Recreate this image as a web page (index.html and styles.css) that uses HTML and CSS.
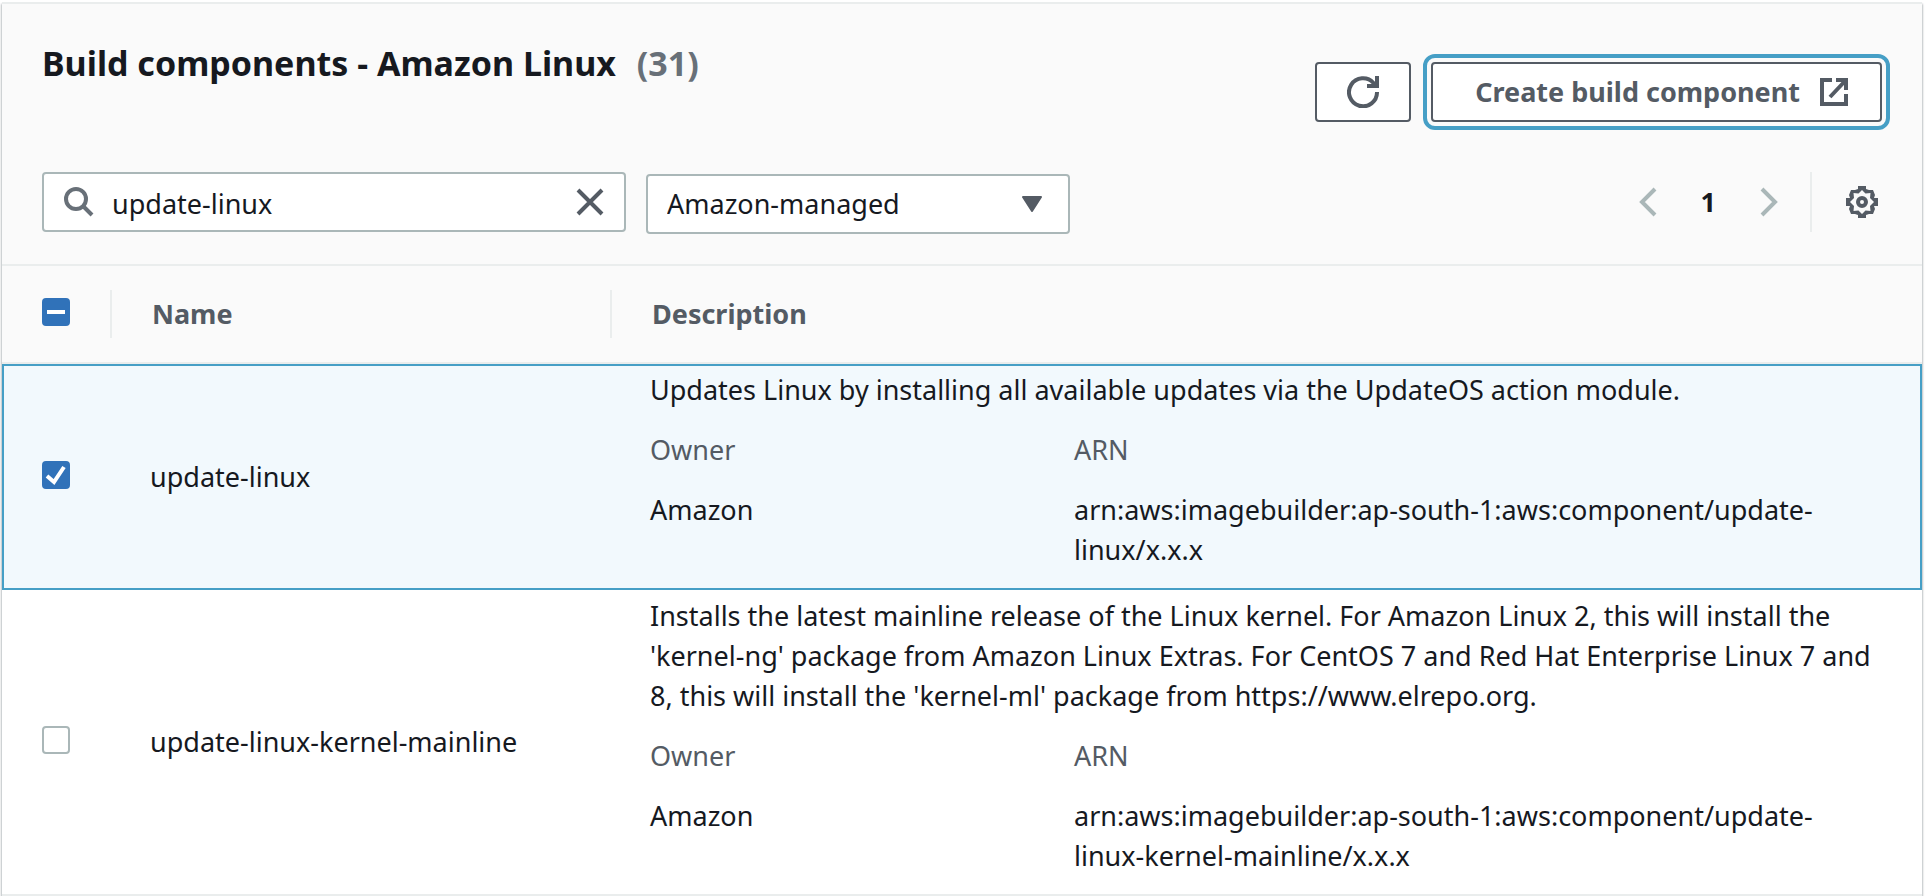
FILE: index.html
```html
<!DOCTYPE html>
<html lang="en">
<head>
<meta charset="utf-8">
<meta name="viewport" content="width=device-width, initial-scale=1">
<title>Build components - Amazon Linux</title>
<link rel="stylesheet" href="styles.css">
</head>
<body>
<main class="panel">
  <header class="panel-header">
    <div class="title-row">
      <h1 class="title">Build components - Amazon Linux <span class="count">(31)</span></h1>
      <div class="actions">
        <button class="btn btn-icon" type="button" aria-label="Refresh">
          <svg class="icon" viewBox="0 0 32 32" aria-hidden="true"><path d="M30 16A14 14 0 1 1 26.500 7L29 10M30 0v12M20 10h12" /></svg>
        </button>
        <button class="btn btn-focus" type="button">
          <span>Create build component</span>
          <svg class="icon icon-external" viewBox="0 0 28 28" aria-hidden="true"><path d="M12 2H2v24h24V16M16 2h10v10M26 2L10 19" /></svg>
        </button>
      </div>
    </div>
    <div class="tools-row">
      <div class="filters">
        <div class="search">
          <svg class="icon icon-search" viewBox="0 0 30 30" aria-hidden="true"><circle cx="12" cy="12" r="10" /><path d="M19 19l9 9" /></svg>
          <input class="search-input" type="text" value="update-linux" aria-label="Find components">
          <button class="plain" type="button" aria-label="Clear filter">
            <svg class="icon icon-close" viewBox="0 0 28 28" aria-hidden="true"><path d="M2 2l24 24M26 2L2 26" /></svg>
          </button>
        </div>
        <div class="select-wrap">
          <select class="select" aria-label="Component owner">
            <option>Amazon-managed</option>
          </select>
          <svg class="caret" viewBox="0 0 20 16" aria-hidden="true"><path d="M1 1h18l-9 14z" /></svg>
        </div>
      </div>
      <nav class="pager" aria-label="Pagination">
        <button class="plain" type="button" aria-label="Previous page">
          <svg class="icon icon-chevron" viewBox="0 0 18 30" aria-hidden="true"><path d="M16 2L3 15l13 13" /></svg>
        </button>
        <button class="plain page" type="button" aria-current="page">1</button>
        <button class="plain" type="button" aria-label="Next page">
          <svg class="icon icon-chevron" viewBox="0 0 18 30" aria-hidden="true"><path d="M2 2l13 13L2 28" /></svg>
        </button>
        <button class="plain settings" type="button" aria-label="Preferences">
          <svg class="icon" viewBox="0 0 32 32" aria-hidden="true"><path class="gear" d="M12 0h8v3l3 1h4l2 5-1 3h4v8h-4l1 3-2 5h-4l-3 1v3h-8v-3l-3-1H5l-2-5 1-3H0v-8h4L3 9l2-5h4l3-1zM16 4l-3.500 3.500-5-.500.500 5L4 16l4 4-.500 5 5-.500L16 28l3.500-3.500 5 .500-.500-5L28 16l-4-4 .500-5-5 .500z" /><circle cx="16" cy="16" r="4" /></svg>
        </button>
      </nav>
    </div>
  </header>

  <table class="components">
    <thead>
      <tr>
        <th class="col-check" scope="col">
          <label class="check">
            <input class="check-box check-on" type="checkbox" aria-label="Select all components">
            <svg class="check-mark" viewBox="0 0 28 28" aria-hidden="true"><path d="M5 14h18" /></svg>
          </label>
        </th>
        <th class="col-name" scope="col"><div class="head">Name</div></th>
        <th scope="col"><div class="head">Description</div></th>
      </tr>
    </thead>
    <tbody>
      <tr class="selected">
        <td class="col-check">
          <label class="check">
            <input class="check-box check-on" type="checkbox" checked aria-label="Select update-linux">
            <svg class="check-mark" viewBox="0 0 28 28" aria-hidden="true"><path d="M5 15l7 6L22 6" /></svg>
          </label>
        </td>
        <td class="name">update-linux</td>
        <td class="details">
          <p class="text">Updates Linux by installing all available updates via the UpdateOS action module.</p>
          <dl class="meta">
            <div class="field"><dt>Owner</dt><dd>Amazon</dd></div>
            <div class="field"><dt>ARN</dt><dd>arn:aws:imagebuilder:ap-south-1:aws:component/update-linux/x.x.x</dd></div>
          </dl>
        </td>
      </tr>
      <tr>
        <td class="col-check">
          <label class="check">
            <input class="check-box" type="checkbox" aria-label="Select update-linux-kernel-mainline">
          </label>
        </td>
        <td class="name">update-linux-kernel-mainline</td>
        <td class="details">
          <p class="text">Installs the latest mainline release of the Linux kernel. For Amazon Linux 2, this will install the 'kernel-ng' package from Amazon Linux Extras. For CentOS 7 and Red Hat Enterprise Linux 7 and 8, this will install the 'kernel-ml' package from https://www.elrepo.org.</p>
          <dl class="meta">
            <div class="field"><dt>Owner</dt><dd>Amazon</dd></div>
            <div class="field"><dt>ARN</dt><dd>arn:aws:imagebuilder:ap-south-1:aws:component/update-linux-kernel-mainline/x.x.x</dd></div>
          </dl>
        </td>
      </tr>
    </tbody>
  </table>
</main>
</body>
</html>
```
FILE: styles.css
```css
* {
  box-sizing: border-box;
}

body {
  margin: 0;
  padding: 2px 8px 0 2px;
  background: #fff;
  color: #16191f;
  font-family: "Noto Sans", "Open Sans", sans-serif;
  font-size: 27px;
  line-height: 40px;
}

button,
input,
select {
  margin: 0;
  font: inherit;
  color: inherit;
}

.panel {
  border-top: 2px solid #eaeded;
  background: #fff;
  box-shadow: 0 2px 2px rgba(0, 28, 36, 0.3), 1px 2px 2px rgba(0, 28, 36, 0.15), -1px 2px 2px rgba(0, 28, 36, 0.15);
}

.panel-header {
  display: flex;
  flex-direction: column;
  gap: 50px;
  padding: 38px 40px 30px;
  border-bottom: 2px solid #eaeded;
  background: #fafafa;
}

.title-row,
.tools-row {
  display: flex;
  align-items: flex-start;
  justify-content: space-between;
}

.title {
  margin: 0;
  font-size: 34px;
  line-height: 42px;
  font-weight: 700;
}

.count {
  margin-left: 12px;
  color: #687078;
}

.actions {
  display: flex;
  gap: 20px;
  padding-top: 20px;
}

.btn {
  display: flex;
  align-items: center;
  justify-content: center;
  gap: 20px;
  height: 60px;
  padding: 0 32px 0 42px;
  border: 2px solid #545b64;
  border-radius: 4px;
  background: #fff;
  color: #545b64;
  font-weight: 700;
}

.btn-icon {
  width: 96px;
  padding: 0;
}

.btn-focus {
  outline: 4px solid #469fc6;
  outline-offset: 4px;
}

.icon {
  display: block;
  flex: none;
  width: 32px;
  height: 32px;
  fill: none;
  stroke: currentColor;
  stroke-width: 4;
}

.gear {
  fill: currentColor;
  fill-rule: evenodd;
  stroke: none;
}

.icon-external,
.icon-close {
  width: 28px;
  height: 28px;
}

.icon-search {
  width: 30px;
  height: 30px;
  color: #687078;
}

.icon-chevron {
  width: 18px;
  height: 30px;
  color: #aab7b8;
}

.plain {
  display: flex;
  padding: 0;
  border: 0;
  background: none;
  color: #545b64;
}

.filters {
  display: flex;
  gap: 20px;
}

.search {
  display: flex;
  align-items: center;
  gap: 18px;
  width: 584px;
  height: 60px;
  padding: 0 20px;
  border: 2px solid #aab7b8;
  border-radius: 4px;
  background: #fff;
}

.search-input {
  flex: 1;
  min-width: 0;
  padding: 4px 0 0;
  border: 0;
  outline: 0;
  background: none;
}

.select-wrap {
  display: grid;
  align-items: center;
  width: 424px;
  margin-top: 2px;
}

.select {
  grid-area: 1 / 1;
  width: 100%;
  height: 60px;
  padding: 0 60px 0 19px;
  border: 2px solid #aab7b8;
  border-radius: 4px;
  background: #fff;
  appearance: none;
}

.caret {
  grid-area: 1 / 1;
  justify-self: end;
  width: 20px;
  height: 16px;
  margin-right: 28px;
  fill: #545b64;
  stroke: #545b64;
  stroke-width: 2;
  stroke-linejoin: round;
  pointer-events: none;
}

.pager {
  display: flex;
  align-items: center;
  gap: 44px;
}

.page {
  color: #16191f;
  font-weight: 700;
}

.settings {
  align-items: center;
  height: 60px;
  margin-left: -12px;
  padding: 0 4px 0 34px;
  border-left: 2px solid #eaeded;
}

.components {
  width: 100%;
  border-collapse: separate;
  border-spacing: 0;
  table-layout: fixed;
}

th {
  padding: 24px 0;
  border-bottom: 2px solid #eaeded;
  background: #fafafa;
  color: #545b64;
  font-weight: 700;
  text-align: left;
}

.head {
  padding: 4px 40px;
  border-left: 2px solid #eaeded;
}

.col-check {
  width: 108px;
  padding-left: 40px;
}

.col-name {
  width: 500px;
}

td {
  padding: 0;
  border-bottom: 2px solid #eaeded;
  vertical-align: middle;
}

.selected td {
  border-top: 2px solid #469fc6;
  border-bottom-color: #469fc6;
  background: #f2f9fd;
}

.selected td:first-child {
  padding-left: 38px;
  border-left: 2px solid #469fc6;
}

.selected td:last-child {
  border-right: 2px solid #469fc6;
}

.name {
  padding-left: 40px;
}

td.details {
  padding: 6px 38px 18px 40px;
}

.selected td.details {
  padding-top: 4px;
}

.check {
  display: grid;
  width: 28px;
  height: 32px;
}

.check-box {
  grid-area: 1 / 1;
  width: 28px;
  height: 28px;
  margin: 0;
  border: 2px solid #aab7b8;
  border-radius: 4px;
  background: #fff;
  appearance: none;
}

.check-on {
  border-color: #3072b9;
  background: #3072b9;
}

.check-mark {
  grid-area: 1 / 1;
  z-index: 1;
  width: 28px;
  height: 28px;
  fill: none;
  stroke: #fff;
  stroke-width: 4;
  pointer-events: none;
}

.text {
  margin: 0 0 20px;
}

.meta {
  display: grid;
  grid-template-columns: 404px 1fr;
  gap: 20px;
  margin: 0;
  padding-right: 40px;
}

.field {
  display: grid;
  gap: 20px;
  align-content: start;
}

dt {
  color: #545b64;
}

dd {
  margin: 0;
}
```
